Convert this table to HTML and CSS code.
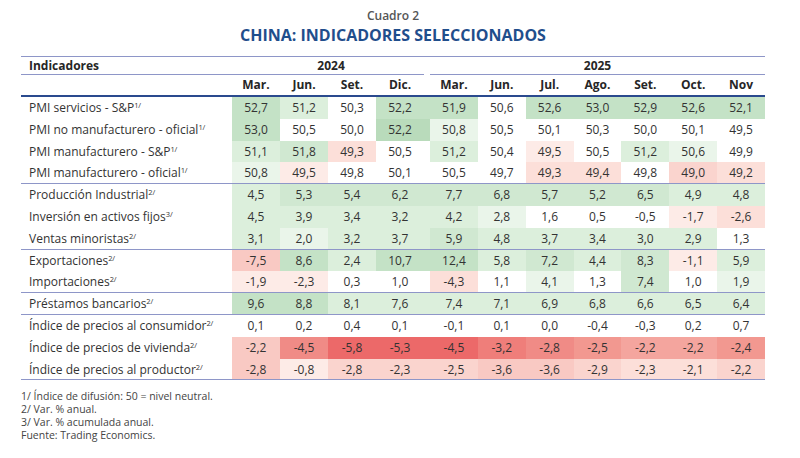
FILE: index.html
```html
<!DOCTYPE html>
<html lang="es">
<head>
<meta charset="utf-8">
<title>Cuadro 2</title>
<link rel="stylesheet" href="styles.css">
</head>
<body>
<div class="page">
  <div class="caption">Cuadro 2</div>
  <h1 class="title">CHINA: INDICADORES SELECCIONADOS</h1>
  <table class="data">
    <colgroup>
      <col class="c-label">
      <col class="c-num"><col class="c-num"><col class="c-num"><col class="c-dic">
      <col class="c-num2"><col class="c-num2"><col class="c-num2"><col class="c-num2"><col class="c-num2"><col class="c-num2"><col class="c-num2">
    </colgroup>
    <thead>
      <tr class="h1row">
        <th class="lab">Indicadores</th>
        <th colspan="4" class="y2024">2024</th>
        <th colspan="7">2025</th>
      </tr>
      <tr class="h2row">
        <th class="lab"></th>
        <th>Mar.</th><th>Jun.</th><th>Set.</th><th class="dic">Dic.</th>
        <th>Mar.</th><th>Jun.</th><th>Jul.</th><th>Ago.</th><th>Set.</th><th>Oct.</th><th>Nov</th>
      </tr>
    </thead>
    <tbody>
      <tr>
        <td class="lab">PMI servicios - S&amp;P<sup>1/</sup></td>
        <td class="g3">52,7</td><td class="g1">51,2</td><td>50,3</td><td class="dic g3">52,2</td>
        <td class="g3">51,9</td><td>50,6</td><td class="g3">52,6</td><td class="g3">53,0</td><td class="g3">52,9</td><td class="g3">52,6</td><td class="g3">52,1</td>
      </tr>
      <tr>
        <td class="lab">PMI no manufacturero - oficial<sup>1/</sup></td>
        <td class="g3">53,0</td><td>50,5</td><td>50,0</td><td class="dic g4">52,2</td>
        <td class="g0">50,8</td><td>50,5</td><td>50,1</td><td>50,3</td><td>50,0</td><td>50,1</td><td>49,5</td>
      </tr>
      <tr>
        <td class="lab">PMI manufacturero - S&amp;P<sup>1/</sup></td>
        <td class="g1">51,1</td><td class="g2">51,8</td><td class="r1">49,3</td><td class="dic">50,5</td>
        <td class="g1">51,2</td><td>50,4</td><td class="r0">49,5</td><td>50,5</td><td class="g1">51,2</td><td class="g0">50,6</td><td>49,9</td>
      </tr>
      <tr class="end">
        <td class="lab">PMI manufacturero - oficial<sup>1/</sup></td>
        <td class="g0">50,8</td><td class="r0">49,5</td><td>49,8</td><td class="dic">50,1</td>
        <td>50,5</td><td>49,7</td><td class="r1">49,3</td><td class="r1">49,4</td><td>49,8</td><td class="r2">49,0</td><td class="r1">49,2</td>
      </tr>
      <tr>
        <td class="lab">Producción Industrial<sup>2/</sup></td>
        <td class="g1">4,5</td><td class="g2">5,3</td><td class="g2">5,4</td><td class="dic g2">6,2</td>
        <td class="g2">7,7</td><td class="g2">6,8</td><td class="g2">5,7</td><td class="g2">5,2</td><td class="g2">6,5</td><td class="g1">4,9</td><td class="g1">4,8</td>
      </tr>
      <tr>
        <td class="lab">Inversión en activos fijos<sup>3/</sup></td>
        <td class="g1">4,5</td><td class="g1">3,9</td><td class="g1">3,4</td><td class="dic g1">3,2</td>
        <td class="g1">4,2</td><td class="g0">2,8</td><td>1,6</td><td>0,5</td><td>-0,5</td><td class="r0">-1,7</td><td class="r1">-2,6</td>
      </tr>
      <tr class="end">
        <td class="lab">Ventas minoristas<sup>2/</sup></td>
        <td class="g1">3,1</td><td class="g0">2,0</td><td class="g1">3,2</td><td class="dic g1">3,7</td>
        <td class="g2">5,9</td><td class="g1">4,8</td><td class="g1">3,7</td><td class="g1">3,4</td><td class="g1">3,0</td><td class="g1">2,9</td><td>1,3</td>
      </tr>
      <tr>
        <td class="lab">Exportaciones<sup>2/</sup></td>
        <td class="r3">-7,5</td><td class="g3">8,6</td><td class="g1">2,4</td><td class="dic g3">10,7</td>
        <td class="g3">12,4</td><td class="g1">5,8</td><td class="g2">7,2</td><td class="g1">4,4</td><td class="g2">8,3</td><td class="r0">-1,1</td><td class="g1">5,9</td>
      </tr>
      <tr class="end">
        <td class="lab">Importaciones<sup>2/</sup></td>
        <td class="r0">-1,9</td><td class="r0">-2,3</td><td>0,3</td><td class="dic">1,0</td>
        <td class="r1">-4,3</td><td>1,1</td><td class="g0">4,1</td><td>1,3</td><td class="g2">7,4</td><td>1,0</td><td class="g0">1,9</td>
      </tr>
      <tr class="end">
        <td class="lab">Préstamos bancarios<sup>2/</sup></td>
        <td class="g3">9,6</td><td class="g3">8,8</td><td class="g1">8,1</td><td class="dic g1">7,6</td>
        <td class="g1">7,4</td><td class="g1">7,1</td><td class="g1">6,9</td><td class="g1">6,8</td><td class="g1">6,6</td><td class="g1">6,5</td><td class="g1">6,4</td>
      </tr>
      <tr>
        <td class="lab">Índice de precios al consumidor<sup>2/</sup></td>
        <td>0,1</td><td>0,2</td><td>0,4</td><td class="dic">0,1</td>
        <td>-0,1</td><td>0,1</td><td>0,0</td><td>-0,4</td><td>-0,3</td><td>0,2</td><td>0,7</td>
      </tr>
      <tr>
        <td class="lab">Índice de precios de vivienda<sup>2/</sup></td>
        <td class="r3">-2,2</td><td class="r6">-4,5</td><td class="r8">-5,8</td><td class="dic r8">-5,3</td>
        <td class="r8">-4,5</td><td class="r7">-3,2</td><td class="r6">-2,8</td><td class="r5">-2,5</td><td class="r4">-2,2</td><td class="r4">-2,2</td><td class="r5">-2,4</td>
      </tr>
      <tr class="end">
        <td class="lab">Índice de precios al productor<sup>2/</sup></td>
        <td class="r3">-2,8</td><td class="r0">-0,8</td><td class="r2">-2,8</td><td class="dic r2">-2,3</td>
        <td class="r2">-2,5</td><td class="r3">-3,6</td><td class="r3">-3,6</td><td class="r2">-2,9</td><td class="r1">-2,3</td><td class="r1">-2,1</td><td class="r2">-2,2</td>
      </tr>
    </tbody>
  </table>
  <div class="notes">
    <p>1/ Índice de difusión: 50 = nivel neutral.</p>
    <p>2/ Var. % anual.</p>
    <p>3/ Var. % acumulada anual.</p>
    <p>Fuente: Trading Economics.</p>
  </div>
</div>
</body>
</html>
```

FILE: styles.css
```css
html, body {
  margin: 0;
  padding: 0;
  background: #ffffff;
}

.page {
  width: 744px;
  margin-left: 21px;
  padding-top: 9px;
  font-family: "Open Sans", "Liberation Sans", sans-serif;
  color: #333333;
}

.caption {
  text-align: center;
  font-size: 12px;
  font-weight: 600;
  line-height: 14px;
  color: #555555;
}

.title {
  margin: 0 0 9px 0;
  text-align: center;
  font-size: 16px;
  font-weight: 700;
  line-height: 24px;
  color: #1f4e8c;
}

.data {
  width: 744px;
  table-layout: fixed;
  border-collapse: separate;
  border-spacing: 0;
  border-top: 1px solid #8e96c8;
  font-size: 12px;
}

.c-label { width: 211px; }
.c-num { width: 48px; }
.c-dic { width: 54px; }
.c-num2 { width: 47.85px; }

.data th,
.data td {
  padding: 0;
  text-align: center;
  white-space: nowrap;
}

.data th {
  font-weight: 700;
  color: #262626;
}

.data .lab {
  text-align: left;
  padding-left: 8px;
}

.data .dic {
  padding-right: 6px;
}

.h1row th {
  line-height: 18px;
  box-shadow: inset 0 -1px 0 #8e96c8;
}

.h1row th.y2024 {
  box-shadow: none;
  background: linear-gradient(#8e96c8, #8e96c8) no-repeat left bottom / calc(100% - 6px) 1px;
}

.h2row th {
  line-height: 20px;
  border-bottom: 2px solid #2a4a8e;
}

.data td {
  line-height: 21.8px;
  color: #333333;
}

.data tr.end td {
  box-shadow: inset 0 -1px 0 #8e96c8;
}

.data sup {
  font-size: 7.5px;
  line-height: 0;
  vertical-align: 4px;
  letter-spacing: -0.2px;
}

.g4 { background: #b9dbbb; }
.g3 { background: #c4e2c6; }
.g2 { background: #d0e8d1; }
.g1 { background: #dcefdc; }
.g0 { background: #eaf5ea; }

.r0 { background: #fdebe7; }
.r1 { background: #fcdfd9; }
.r2 { background: #fad4ce; }
.r3 { background: #f9c9c3; }
.r4 { background: #f4a59e; }
.r5 { background: #f29890; }
.r6 { background: #f08b86; }
.r7 { background: #ef7e7a; }
.r8 { background: #ec6969; }

.notes {
  margin-top: 10px;
  font-size: 10.5px;
  line-height: 13px;
  color: #444444;
}

.notes p {
  margin: 0;
}
```
